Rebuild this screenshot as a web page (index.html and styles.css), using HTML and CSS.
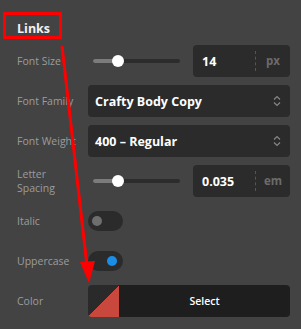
FILE: index.html
```html
<!DOCTYPE html>
<html lang="en">
<head>
  <meta charset="UTF-8" />
  <title>Links typography</title>
  <link rel="stylesheet" href="styles.css">
</head>
<body>
  <div class="head"><span class="title">Links</span></div>
  <div class="rows">
    <div class="row">
      <div class="lbl">Font Size</div>
      <div class="ctrl">
        <div class="range"><span class="fill"></span><span class="thumb"></span></div>
        <div class="num"><span class="val">14</span><span class="unit">px</span></div>
      </div>
    </div>
    <div class="row">
      <div class="lbl">Font Family</div>
      <div class="ctrl">
        <div class="sel"><span>Crafty Body Copy</span>
          <svg class="chev" width="8" height="12" viewBox="0 0 8 12"><path d="M1 4.5L4 1.5L7 4.5M1 7.5L4 10.5L7 7.5" fill="none" stroke="#878787" stroke-width="1.2"/></svg>
        </div>
      </div>
    </div>
    <div class="row">
      <div class="lbl">Font Weight</div>
      <div class="ctrl">
        <div class="sel"><span>400 – Regular</span>
          <svg class="chev" width="8" height="12" viewBox="0 0 8 12"><path d="M1 4.5L4 1.5L7 4.5M1 7.5L4 10.5L7 7.5" fill="none" stroke="#878787" stroke-width="1.2"/></svg>
        </div>
      </div>
    </div>
    <div class="row">
      <div class="lbl">Letter<br>Spacing</div>
      <div class="ctrl">
        <div class="range"><span class="fill"></span><span class="thumb"></span></div>
        <div class="num"><span class="val">0.035</span><span class="unit">em</span></div>
      </div>
    </div>
    <div class="row">
      <div class="lbl">Italic</div>
      <div class="ctrl"><span class="tog"><span class="knob"></span></span></div>
    </div>
    <div class="row">
      <div class="lbl">Uppercase</div>
      <div class="ctrl"><span class="tog on"><span class="knob"></span></span></div>
    </div>
    <div class="row">
      <div class="lbl">Color</div>
      <div class="ctrl">
        <div class="color"><span class="swatch"></span><span class="pick">Select</span></div>
      </div>
    </div>
  </div>

  <!-- annotation overlay -->
  <div class="mark"></div>
  <svg class="arrow" width="301" height="329" viewBox="0 0 301 329">
    <line x1="62" y1="46" x2="87" y2="266" stroke="#f00" stroke-width="3"/>
    <polygon points="80,262 95,261 89,283" fill="#f00"/>
  </svg>
</body>
</html>
```

FILE: styles.css
```css
html,body{margin:0;padding:0}
body{width:301px;height:329px;overflow:hidden;position:relative;background:#434343;font-family:"Open Sans","Noto Sans",sans-serif;color:#fff}
.head{height:45px;box-sizing:border-box;padding:16px 0 0 17px}
.title{display:inline-block;font-size:12.5px;font-weight:700;line-height:14px;color:#f2f2f2;border-bottom:1px dotted #8c8c8c}
.rows{display:flex;flex-direction:column;gap:8px;padding:0 11px 0 17px}
.row{display:flex;align-items:center;height:32px}
.lbl{width:71px;flex:none;font-size:10.5px;line-height:14px;color:#9c9c9c}
.ctrl{flex:1;display:flex;align-items:center;gap:8px;min-width:0}
.range{flex:1;position:relative;height:12px;margin:0 5px}
.range:before{content:"";position:absolute;left:0;right:0;top:4px;height:4px;background:#2c2c2c;border-radius:2px}
.range .fill{position:absolute;left:0;top:4px;width:25px;height:4px;background:#7b7b7b;border-radius:2px 0 0 2px}
.range .thumb{position:absolute;left:19px;top:0;width:12px;height:12px;border-radius:50%;background:#fff}
.num{width:97px;height:32px;flex:none;display:flex;align-items:center;background:#2b2b2b;border-radius:4px}
.val{flex:1;padding-left:9px;font-size:12.5px;font-weight:700;color:#fff}
.unit{width:34px;height:20px;line-height:20px;border-left:1px dashed #555;text-align:center;font-size:11.5px;font-weight:700;color:#6b6b6b}
.sel{flex:1;height:32px;box-sizing:border-box;display:flex;align-items:center;justify-content:space-between;padding:0 9px 0 7px;background:#2b2b2b;border-radius:4px;font-size:12.5px;font-weight:700;color:#fff}
.tog{position:relative;display:block;width:35px;height:20px;border-radius:10px;background:#2b2b2b}
.knob{position:absolute;left:4px;top:5px;width:10px;height:10px;border-radius:50%;background:#6e6e6e}
.tog.on .knob{left:19px;background:#1a8ee6}
.color{flex:1;height:32px;display:flex;border-radius:4px;overflow:hidden}
.swatch{width:31px;flex:none;background:linear-gradient(to bottom right,#2a2a2a 50%,#c8483e 50%)}
.pick{flex:1;display:flex;align-items:center;justify-content:center;background:#1e1e1e;font-size:10.5px;font-weight:600;color:#fff}
.mark{position:absolute;left:3px;top:12px;width:53px;height:21px;border:3px solid #f00}
.arrow{position:absolute;left:0;top:0;pointer-events:none}
```
